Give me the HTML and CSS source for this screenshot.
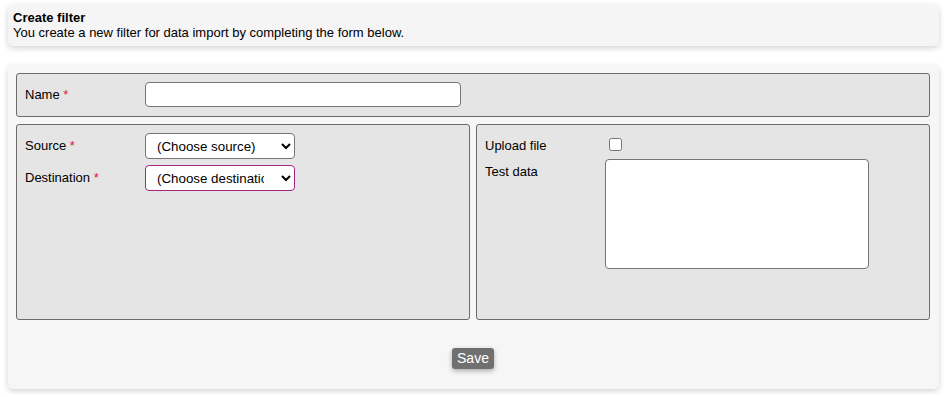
FILE: index.html
```html
<!doctype html>
<html lang="en">
	<head>
		<meta charset="UTF-8" />
		<meta name="viewport" content="width=device-width, initial-scale=1.0" />
		<title>Create filter</title>
		<link rel="stylesheet" href="styles.css">
	</head>
	<body>
		<div class="page-header">
			<div class="page-title">Create filter</div>
			<div class="page-subtitle">You create a new filter for data import by completing the form below.</div>
		</div>

		<form class="filter-form">
			<div class="panel panel-name">
				<div class="form-row">
					<label class="form-label" for="filterName">Name <span class="required">*</span></label>
					<input type="text" class="text-input" id="filterName" />
				</div>
			</div>

			<div class="panel-columns">
				<div class="panel">
					<div class="form-row">
						<label class="form-label" for="source">Source <span class="required">*</span></label>
						<select class="select-input" id="source">
							<option>(Choose source)</option>
						</select>
					</div>
					<div class="form-row">
						<label class="form-label" for="destination">Destination <span class="required">*</span></label>
						<select class="select-input invalid" id="destination">
							<option>(Choose destination)</option>
						</select>
					</div>
				</div>

				<div class="panel">
					<div class="form-row row-check">
						<label class="form-label" for="uploadFile">Upload file</label>
						<input type="checkbox" class="check-input" id="uploadFile" />
					</div>
					<div class="form-row">
						<label class="form-label" for="testData">Test data</label>
						<textarea class="text-area" id="testData"></textarea>
					</div>
				</div>
			</div>

			<div class="form-actions">
				<button type="button" class="save-btn">Save</button>
			</div>
		</form>
	</body>
</html>
```

FILE: styles.css
```css
* {
	box-sizing: border-box;
}

body {
	margin: 0;
	padding: 5px 8px;
	font-family: "Liberation Sans", Arial, sans-serif;
	font-size: 13px;
	color: #000;
	background: #fff;
}

.page-header {
	background: #f5f5f5;
	border-radius: 5px;
	box-shadow: 0 2px 6px rgba(0, 0, 0, 0.18);
	padding: 5px 5px 6px;
	line-height: 15px;
}

.page-title {
	font-weight: 700;
}

.filter-form {
	margin-top: 19px;
	background: #f6f6f6;
	border-radius: 5px;
	box-shadow: 0 2px 6px rgba(0, 0, 0, 0.18);
	padding: 8px 9px 20px 8px;
}

.panel {
	background: #e5e5e5;
	border: 1px solid #6b6b6b;
	border-radius: 3px;
	padding: 8px;
	display: flex;
	flex-direction: column;
	gap: 6px;
}

.panel-name {
	padding-bottom: 9px;
}

.panel-columns {
	display: grid;
	grid-template-columns: 1fr 1fr;
	gap: 6px;
	margin-top: 7px;
	height: 196px;
}

.form-row {
	display: flex;
	align-items: flex-start;
}

.form-label {
	width: 120px;
	flex: none;
	padding-top: 5px;
	line-height: 15px;
}

.required {
	color: #e3173e;
}

.text-input {
	width: 316px;
	height: 25px;
	border: 1px solid #767676;
	border-radius: 4px;
	background: #fff;
	font: inherit;
}

.select-input {
	width: 150px;
	height: 26px;
	border: 1px solid #767676;
	border-radius: 4px;
	background: #fff;
	font-family: "Liberation Sans", Arial, sans-serif;
	font-size: 13.33px;
	padding: 0 14px 0 7px;
	color: #000;
}

.select-input.invalid {
	border-color: #a3267f;
}

.row-check {
	height: 20px;
}

.check-input {
	width: 13px;
	height: 13px;
	margin: 5px 0 0 4px;
}

.text-area {
	width: 264px;
	height: 110px;
	border: 1px solid #767676;
	border-radius: 4px;
	background: #fff;
	resize: none;
}

.form-actions {
	display: flex;
	justify-content: center;
	padding-top: 28px;
}

.save-btn {
	background: #707070;
	color: #fff;
	border: none;
	border-radius: 3px;
	font-family: "Liberation Sans", Arial, sans-serif;
	font-size: 14px;
	line-height: 17px;
	padding: 2px 5px;
	box-shadow: 0 2px 5px rgba(0, 0, 0, 0.3);
	cursor: pointer;
}
```
